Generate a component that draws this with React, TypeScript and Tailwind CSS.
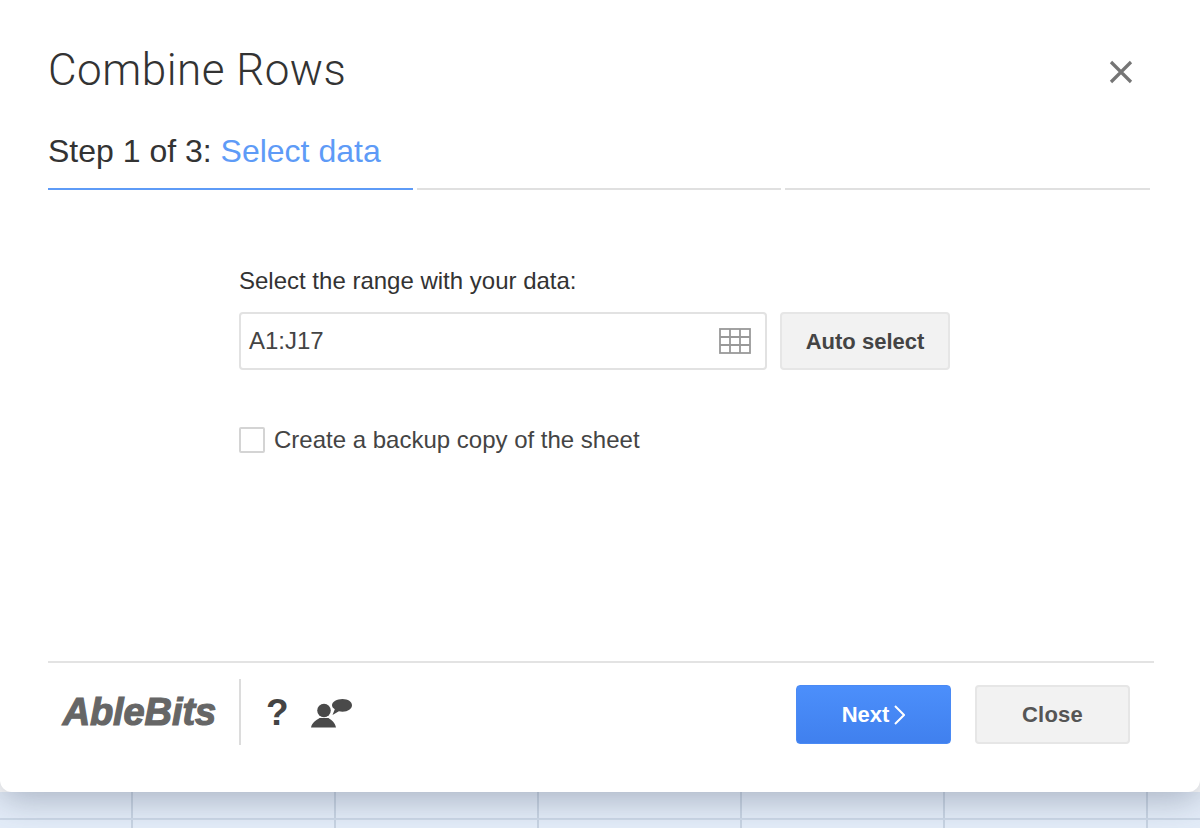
const sans = "font-['Liberation_Sans',Arial,sans-serif]";

function GridIcon() {
  return (
    <svg width="32" height="26" viewBox="0 0 32 26" fill="none" stroke="#999" strokeWidth="1.8">
      <rect x="1" y="1" width="30" height="24" />
      <path d="M11 1v24M21 1v24M1 9h30M1 17h30" />
    </svg>
  );
}

function ContactIcon() {
  return (
    <svg width="42" height="29" viewBox="0 0 42 29" fill="#4a4a4a">
      <circle cx="13" cy="11.500" r="6.800" />
      <path d="M0 28.500c1-5 5-7 8.500-9.500h9c3.500 2.500 6.500 4.500 7.500 9.500z" />
      <path d="M31.500 0C37 0 41 2.800 41 6.300s-4 6.500-9.500 6.500c-1.300 0-2.500-.2-3.600-.5L21.500 16l2.300-5.800c-1.800-1-2.800-2.400-2.800-3.900C21 2.800 26 0 31.500 0z" />
    </svg>
  );
}

function StepTrack({ active }: { active?: boolean }) {
  return <div className={active ? "h-[2px] flex-1 bg-[#5e9bf7]" : "h-[2px] flex-1 bg-[#e0e0e0]"} />;
}

function SheetRow({ className }: { className: string }) {
  return (
    <div className={`flex ${className}`}>
      <div className="w-[133px] border-r-2 border-[#c8d4e3]" />
      {[0, 1, 2, 3, 4].map((i) => (
        <div key={i} className="w-[203px] border-r-2 border-[#c8d4e3]" />
      ))}
    </div>
  );
}

export default function App() {
  return (
    <div className={`flex h-[828px] w-[1200px] flex-col overflow-hidden bg-white ${sans}`}>
      <div className="relative z-10 flex h-[792px] w-[1200px] shrink-0 flex-col rounded-b-[12px] bg-white pl-[48px] pr-[46px] shadow-[0_6px_36px_rgba(60,70,95,0.38)]">
        <div className="flex items-start justify-between pt-[44px]">
          <h1 className="font-['Roboto',sans-serif] text-[44px] font-light leading-[52px] tracking-[0.5px] text-[#333]">Combine Rows</h1>
          <svg className="mr-[21px] mt-[16px]" width="24" height="24" viewBox="0 0 24 24" stroke="#757575" strokeWidth="3.2">
            <path d="M2 2l20 20M22 2L2 22" />
          </svg>
        </div>

        <div className="mt-[36px] pr-[4px] text-[32px] leading-[38px] text-[#333]">
          Step 1 of 3: <span className="text-[#5e9bf7]">Select data</span>
        </div>
        <div className="mt-[18px] flex gap-[4px] pr-[4px]">
          <StepTrack active />
          <StepTrack />
          <StepTrack />
        </div>

        <div className="ml-[191px] mt-[77px] flex flex-1 flex-col">
          <div className="text-[24px] leading-[28px] text-[#333]">Select the range with your data:</div>
          <div className="mt-[17px] flex gap-[13px]">
            <div className="flex h-[58px] w-[528px] items-center justify-between rounded-[4px] border-2 border-[#e2e2e2] pl-[8px] pr-[14px] text-[24px] text-[#444]">
              A1:J17
              <GridIcon />
            </div>
            <button className="h-[58px] w-[170px] rounded-[4px] border-2 border-[#e6e6e6] bg-[#f2f2f2] text-[22px] font-bold text-[#444]">
              Auto select
            </button>
          </div>
          <label className="mt-[56px] flex items-center gap-[9px] text-[24px] leading-[28px] text-[#444]">
            <span className="h-[26px] w-[26px] rounded-[2px] border-2 border-[#d4d4d4] bg-white" />
            Create a backup copy of the sheet
          </label>
        </div>

        <div className="flex h-[131px] items-start border-t-2 border-[#e3e3e3] pt-[16px]">
          <div className="flex h-[66px] w-[193px] items-center justify-end border-r-2 border-[#dcdcdc] pr-[23px]">
            <span className="text-[38px] font-bold italic tracking-[-0.1px] text-[#666] [-webkit-text-stroke:1.2px_#666]">AbleBits</span>
          </div>
          <span className="ml-[25px] mt-[10px] text-[37px] font-bold leading-[48px] text-[#444]">?</span>
          <span className="ml-[22px] mt-[20px]">
            <ContactIcon />
          </span>
          <div className="ml-auto mr-[24px] mt-[6px] flex gap-[24px]">
            <button className="flex h-[59px] w-[155px] items-center justify-center gap-[4px] rounded-[4px] border border-[#4a8af5] bg-gradient-to-b from-[#4c8ffb] to-[#4080ee] text-[22px] font-bold text-white">
              Next
              <svg width="12" height="20" viewBox="0 0 12 20" fill="none" stroke="white" strokeWidth="2">
                <path d="M2 1l9 9-9 9" />
              </svg>
            </button>
            <button className="h-[59px] w-[155px] rounded-[4px] border-2 border-[#e6e6e6] bg-[#f2f2f2] text-[22px] font-bold tracking-[0.2px] text-[#555]">
              Close
            </button>
          </div>
        </div>
      </div>

      <div className="h-[36px] shrink-0 bg-[#e4edf9]">
        <SheetRow className="h-[28px] border-b-2 border-[#ccd8e7]" />
        <SheetRow className="h-[8px]" />
      </div>
    </div>
  );
}
